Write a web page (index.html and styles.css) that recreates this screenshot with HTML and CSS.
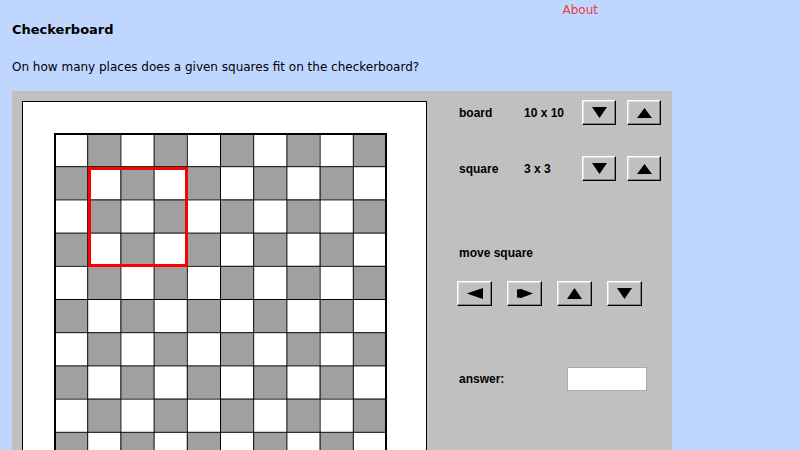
FILE: index.html
```html
<!DOCTYPE html>
<html>
<head>
<meta charset="utf-8">
<link rel="stylesheet" href="styles.css">
</head>
<body>
<div class="topbar"><a class="about" href="#">About</a></div>
<div class="page">
  <h1 class="title">Checkerboard</h1>
  <p class="question">On how many places does a given squares fit on the checkerboard?</p>
  <div class="panel">
    <div class="canvas">
      <svg class="board" width="334" height="334" viewBox="0 0 334 334" shape-rendering="crispEdges">
        <defs>
          <pattern id="checks" patternUnits="userSpaceOnUse" width="66.4" height="66.4">
            <rect x="0" y="0" width="66.4" height="66.4" fill="#ffffff"/>
            <rect x="33.2" y="0" width="33.2" height="33.2" fill="#a0a0a0"/>
            <rect x="0" y="33.2" width="33.2" height="33.2" fill="#a0a0a0"/>
          </pattern>
          <pattern id="lines" patternUnits="userSpaceOnUse" width="33.2" height="33.2">
            <rect x="0" y="0" width="33.2" height="1.2" fill="#000"/>
            <rect x="0" y="0" width="1.2" height="33.2" fill="#000"/>
          </pattern>
        </defs>
        <rect x="0" y="0" width="332" height="332" fill="url(#checks)"/>
        <rect x="0" y="0" width="332" height="332" fill="url(#lines)"/>
        <rect x="1" y="1" width="331" height="331" fill="none" stroke="#000" stroke-width="2"/>
        <rect x="35.2" y="35.2" width="97.6" height="97.6" fill="none" stroke="#ff0000" stroke-width="3"/>
      </svg>
    </div>
    <div class="controls">
      <div class="row">
        <span class="label">board</span>
        <span class="value">10 x 10</span>
        <button class="btn"><svg width="15" height="11" viewBox="0 0 15 11"><polygon points="0,0 15,0 7.5,11" fill="#000"/></svg></button>
        <button class="btn"><svg width="15" height="10" viewBox="0 0 15 10"><polygon points="0,10 15,10 7.5,0" fill="#000"/></svg></button>
      </div>
      <div class="row row-square">
        <span class="label">square</span>
        <span class="value">3 x 3</span>
        <button class="btn"><svg width="15" height="11" viewBox="0 0 15 11"><polygon points="0,0 15,0 7.5,11" fill="#000"/></svg></button>
        <button class="btn"><svg width="15" height="10" viewBox="0 0 15 10"><polygon points="0,10 15,10 7.5,0" fill="#000"/></svg></button>
      </div>
      <div class="move-label">move square</div>
      <div class="move-row">
        <button class="btn mbtn"><svg width="16" height="11" viewBox="0 0 16 11"><polygon points="0,5.5 4,4 16,0 16,11 4,7" fill="#000"/></svg></button>
        <button class="btn mbtn"><svg width="16" height="11" viewBox="0 0 16 11"><polygon points="0,1.5 4,1 16,5.5 4,10 0,9.5" fill="#000"/></svg></button>
        <button class="btn mbtn"><svg width="15" height="11" viewBox="0 0 15 11"><polygon points="0,11 15,11 7.5,0" fill="#000"/></svg></button>
        <button class="btn mbtn"><svg width="15" height="11" viewBox="0 0 15 11"><polygon points="0,0 15,0 7.5,11" fill="#000"/></svg></button>
      </div>
      <div class="answer-row">
        <span class="answer-label">answer:</span>
        <input class="answer" type="text">
      </div>
    </div>
  </div>
</div>
</body>
</html>
```

FILE: styles.css
```css
html, body {
  margin: 0;
  padding: 0;
  background: #bfd7fe;
  overflow: hidden;
}
body {
  font-family: "DejaVu Sans", Verdana, sans-serif;
  font-size: 12px;
  color: #000;
  height: 450px;
}
.topbar {
  display: flex;
  justify-content: flex-end;
  padding-right: 202px;
  height: 21px;
  line-height: 21px;
}
.about {
  color: #ee3a40;
  text-decoration: none;
  font-size: 12px;
}
.page {
  padding: 0 12px;
}
.title {
  margin: 0;
  font-size: 13px;
  font-weight: bold;
  line-height: 18px;
}
.question {
  margin: 19px 0 0 0;
  font-size: 12px;
  line-height: 18px;
}
.panel {
  margin-top: 15px;
  width: 660px;
  height: 400px;
  background: #c0c0c0;
  display: flex;
  align-items: flex-start;
  padding: 0 10px;
  box-sizing: border-box;
}
.canvas {
  margin-top: 10px;
  width: 405px;
  height: 500px;
  box-sizing: border-box;
  border: 1px solid #000;
  background: #fff;
  padding: 31px 0 0 31px;
  flex: none;
}
.board {
  display: block;
}
.controls {
  margin-left: 30px;
  padding-top: 9px;
  font-family: "Liberation Sans", Arial, sans-serif;
  font-size: 12px;
  font-weight: bold;
}
.row {
  display: flex;
  align-items: center;
  height: 25px;
}
.row-square {
  margin-top: 31px;
}
.label {
  width: 65px;
  padding-left: 2px;
}
.value {
  width: 58px;
}
.btn {
  width: 34px;
  height: 25px;
  margin: 0 11px 0 0;
  padding: 0;
  box-sizing: border-box;
  background: #c0c0c0;
  border-style: solid;
  border-width: 1px;
  border-color: #ffffff #000000 #000000 #ffffff;
  box-shadow: inset -1px -1px 0 #808080, inset 1px 1px 0 #dfdfdf;
  display: flex;
  align-items: center;
  justify-content: center;
}
.btn svg {
  display: block;
}
.move-label {
  margin-top: 64px;
  padding-left: 2px;
  line-height: 16px;
}
.move-row {
  display: flex;
  margin-top: 20px;
}
.mbtn {
  width: 35px;
  margin-right: 15px;
}
.answer-row {
  display: flex;
  align-items: center;
  margin-top: 61px;
}
.answer-label {
  width: 108px;
  padding-left: 2px;
}
.answer {
  width: 80px;
  height: 24px;
  box-sizing: border-box;
  border: 1px solid #a9a9b0;
  background: #fff;
  padding: 0;
  margin: 0;
}
```
